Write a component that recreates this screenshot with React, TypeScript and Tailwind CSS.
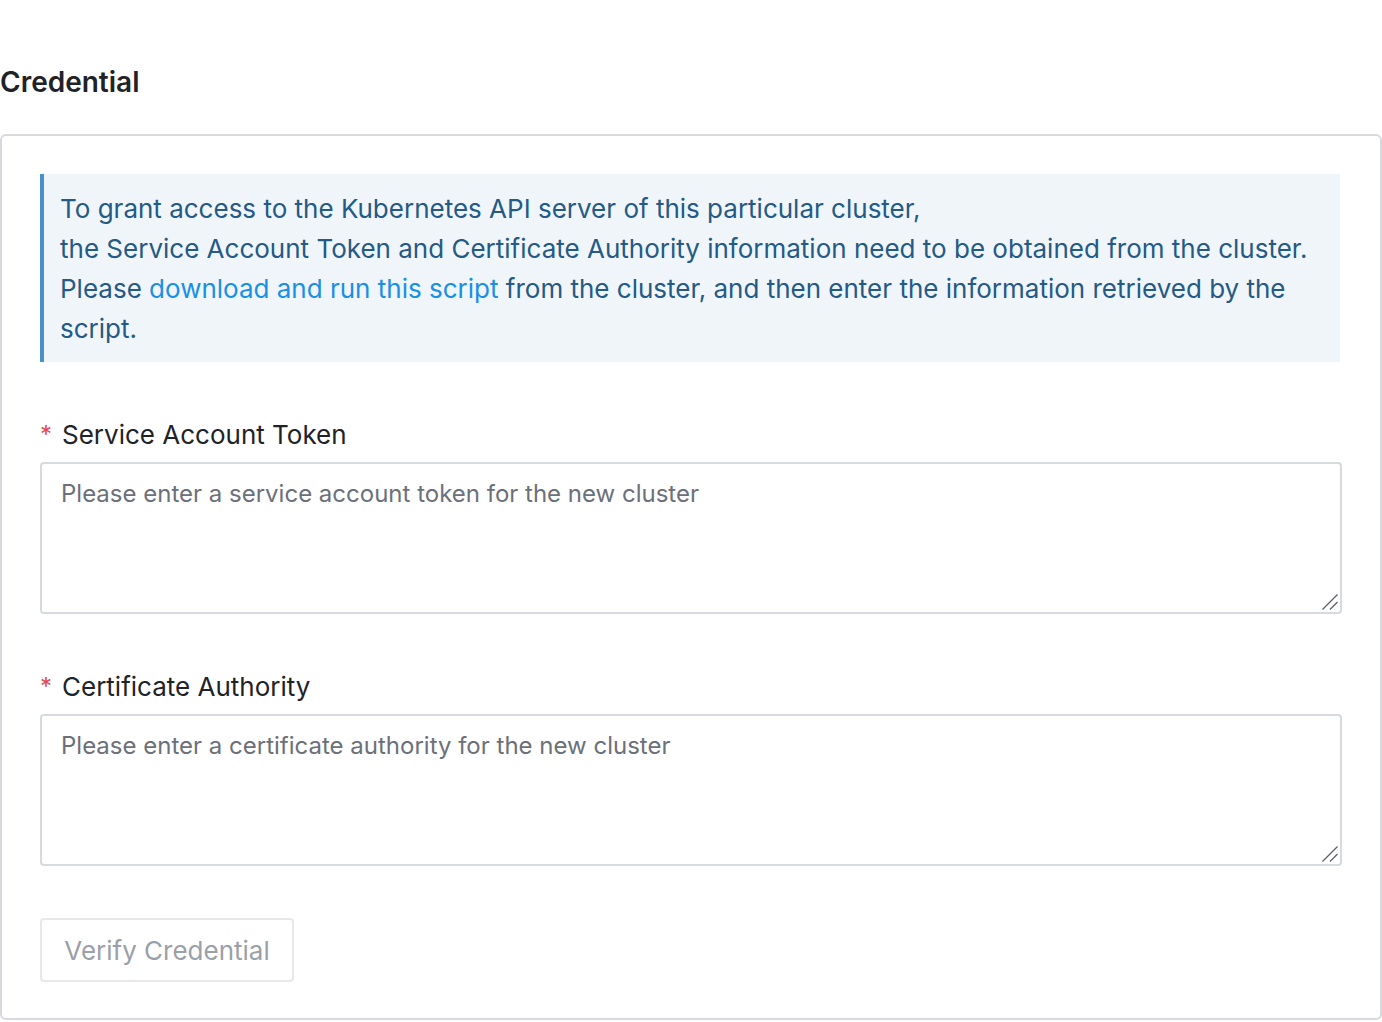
function ResizeGrip() {
  return (
    <svg
      viewBox="0 0 16 16"
      className="pointer-events-none absolute bottom-[4px] right-[4px] h-4 w-4"
      fill="none"
    >
      <path d="M0.5 15.5L15.5 0.5" stroke="#5b5f66" strokeWidth="1.2" />
      <path d="M8 15.5L15.5 8" stroke="#5b5f66" strokeWidth="1.2" />
    </svg>
  );
}

function Field({ label, placeholder, className }: { label: string; placeholder: string; className?: string }) {
  return (
    <div className={className}>
      <label className="flex items-center text-[26px] leading-[32px] text-[#1f2328]">
        <span className="w-[22px] text-[24px] text-[#e5484d]">*</span>
        <span>{label}</span>
      </label>
      <div className="relative mt-[11px]">
        <textarea
          placeholder={placeholder}
          className="block h-[152px] w-full resize-none rounded-[4px] border-2 border-[#d6d9de] px-[19px] py-[14px] text-[24px] leading-[32px] text-[#1f2328] outline-none placeholder:text-[#6b7079]"
        />
        <ResizeGrip />
      </div>
    </div>
  );
}

export default function App() {
  return (
    <div className="min-h-screen bg-white font-['Inter',sans-serif] text-[#1f2328]">
      {/* Section title */}
      <h2 className="pt-[64px] text-[28px] font-semibold leading-[36px] text-[#1f2328]">Credential</h2>

      {/* Card */}
      <div className="mt-[34px] rounded-[6px] border-2 border-[#d6d9de] px-[38px] pt-[38px] pb-[36px]">
        {/* Info note */}
        <div className="mr-[2px] border-l-4 border-[#4a8fc7] bg-[#f0f5fa] pt-[15px] pb-[13px] pl-[16px] pr-4 text-[26px] leading-[40px] text-[#245a85]">
          To grant access to the Kubernetes API server of this particular cluster,
          <br />
          the Service Account Token and Certificate Authority information need to be obtained from the cluster.
          <br />
          Please{" "}
          <a href="#" className="text-[#1a8fe6]">
            download and run this script
          </a>{" "}
          from the cluster, and then enter the information retrieved by the script.
        </div>

        <Field
          className="mt-[57px]"
          label="Service Account Token"
          placeholder="Please enter a service account token for the new cluster"
        />
        <Field
          className="mt-[57px]"
          label="Certificate Authority"
          placeholder="Please enter a certificate authority for the new cluster"
        />

        <button
          disabled
          className="mt-[52px] h-[64px] w-[254px] rounded-[4px] border-2 border-[#e6e8eb] bg-white text-[26px] text-[#9aa0a8]"
        >
          Verify Credential
        </button>
      </div>
    </div>
  );
}
